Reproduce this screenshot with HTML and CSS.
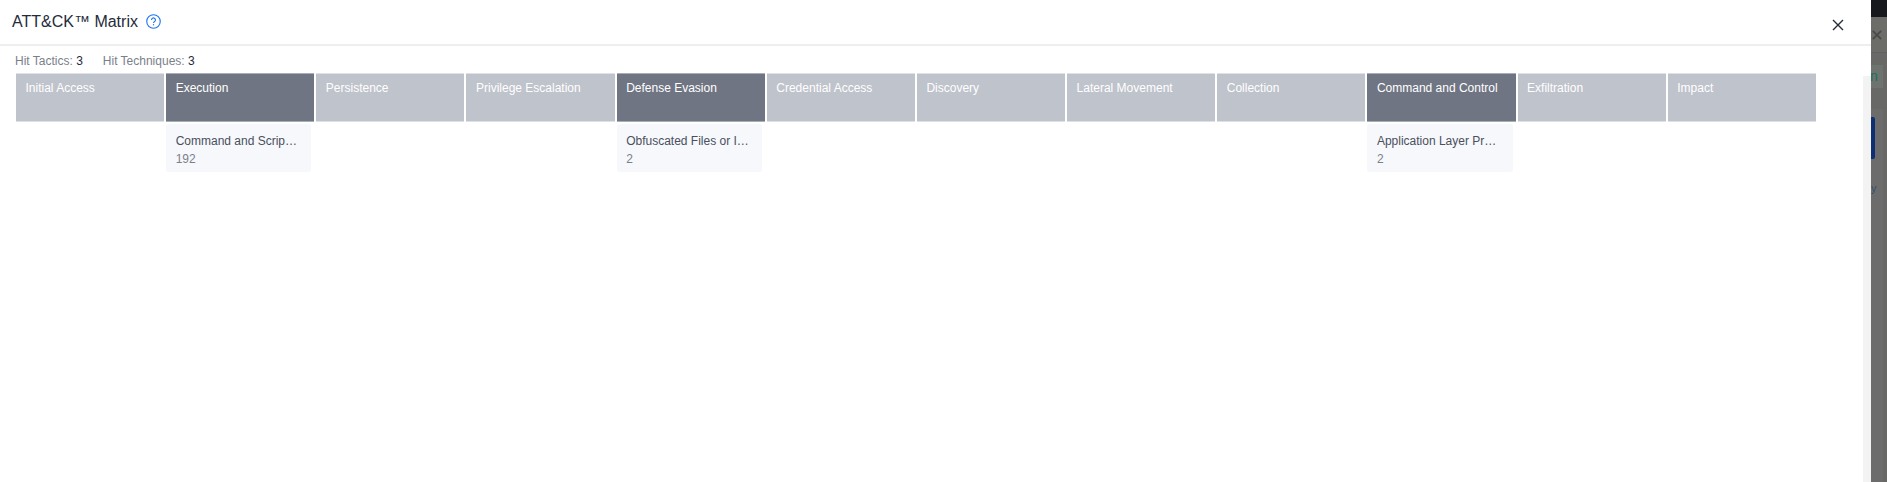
FILE: index.html
```html
<!DOCTYPE html>
<html lang="en">
<head>
<meta charset="utf-8">
<title>ATT&amp;CK Matrix</title>
<link rel="stylesheet" href="styles.css">
</head>
<body>
<div class="screen">
  <main class="modal">
    <header class="modal-head">
      <h1 class="modal-title">ATT&amp;CK™ Matrix</h1>
      <svg class="help-icon" viewBox="0 0 16 16" width="15" height="15" aria-hidden="true">
        <circle cx="8" cy="8" r="7.2" fill="none" stroke="#1f74f0" stroke-width="1.2"/>
        <path d="M5.9 6.3a2.1 2.1 0 1 1 3.3 1.7c-.8.5-1.2.9-1.2 1.7" fill="none" stroke="#1f74f0" stroke-width="1.2"/>
        <rect x="7.4" y="10.8" width="1.2" height="1.3" fill="#1f74f0"/>
      </svg>
      <svg class="close-icon" viewBox="0 0 12 12" width="12" height="12" aria-hidden="true">
        <path d="M1 1l10 10M11 1L1 11" fill="none" stroke="#252b3a" stroke-width="1.4"/>
      </svg>
    </header>
    <div class="modal-body">
      <div class="stats">
        <span class="stat">Hit Tactics: <b>3</b></span>
        <span class="stat">Hit Techniques: <b>3</b></span>
      </div>
      <div class="matrix">
        <section class="col"><div class="tactic">Initial Access</div></section>
        <section class="col">
          <div class="tactic hit">Execution</div>
          <div class="tech"><div class="tech-name">Command and Scripting Interpreter</div><div class="tech-count">192</div></div>
        </section>
        <section class="col"><div class="tactic">Persistence</div></section>
        <section class="col"><div class="tactic">Privilege Escalation</div></section>
        <section class="col">
          <div class="tactic hit">Defense Evasion</div>
          <div class="tech"><div class="tech-name">Obfuscated Files or Information</div><div class="tech-count">2</div></div>
        </section>
        <section class="col"><div class="tactic">Credential Access</div></section>
        <section class="col"><div class="tactic">Discovery</div></section>
        <section class="col"><div class="tactic">Lateral Movement</div></section>
        <section class="col"><div class="tactic">Collection</div></section>
        <section class="col">
          <div class="tactic hit">Command and Control</div>
          <div class="tech"><div class="tech-name">Application Layer Protocol</div><div class="tech-count">2</div></div>
        </section>
        <section class="col"><div class="tactic">Exfiltration</div></section>
        <section class="col"><div class="tactic">Impact</div></section>
      </div>
    </div>
    <div class="scroll-track"></div>
  </main>
  <aside class="backdrop" aria-hidden="true">
    <div class="bd-top"></div>
    <div class="bd-head">
      <svg class="bd-x" viewBox="0 0 12 12" width="10" height="10"><path d="M1 1l10 10M11 1L1 11" fill="none" stroke="#4a4a4a" stroke-width="2.2"/></svg>
    </div>
    <div class="bd-tag">n</div>
    <div class="bd-card">
      <div class="bd-blue"></div>
      <div class="bd-letter">y</div>
    </div>
  </aside>
</div>
</body>
</html>
```
FILE: styles.css
```css
* { box-sizing: border-box; }
html, body { margin: 0; height: 100%; overflow: hidden; background: #fff; }
body { font-family: "Liberation Sans", Arial, sans-serif; font-size: 12px; color: #252b3a; }

.screen { display: flex; width: 1887px; height: 482px; }

.modal { position: relative; flex: 0 0 1871px; background: #fff; }

.modal-head {
  display: flex;
  align-items: center;
  height: 46px;
  padding: 0 12px;
  border-bottom: 2px solid #eeeeef;
}
.modal-title { margin: 0; font-size: 16px; font-weight: 400; line-height: 44px; color: #252b3a; }
.help-icon { margin: -2px 0 0 8px; }
.close-icon { margin: 5px 15px 0 auto; }

.modal-body { padding: 8px 0 0 16px; }

.stats { display: flex; gap: 20px; height: 19px; margin-left: -1px; line-height: 15px; color: #7b7f8a; }
.stat b { font-weight: 400; color: #252b3a; }

.matrix { display: grid; grid-template-columns: repeat(12, 150.16px); width: 1801.92px; }
.col { min-width: 0; }

.tactic {
  width: calc(100% - 2px);
  height: 49px;
  padding: 6px 9.5px;
  line-height: 16px;
  color: #fff;
  background: #bfc3cc;
  border-top: 1px solid #dfe1e6;
  border-bottom: 1px solid #dfe1e6;
}
.tactic.hit { background: #6f7583; border-top-color: #a9adb6; border-bottom-color: #a9adb6; }

.tech {
  width: 145.3px;
  height: 48px;
  margin-top: 2px;
  padding: 8px 12px 0 9.5px;
  background: #f6f8fc;
  border-radius: 2px;
  line-height: 18px;
}
.tech-name { overflow: hidden; white-space: nowrap; text-overflow: ellipsis; color: #4a4f5c; }
.tech-count { color: #7b7f8a; }

.scroll-track {
  position: absolute;
  top: 76px;
  right: 0;
  bottom: 0;
  width: 8px;
  background: #f3f3f3;
}

.backdrop { flex: 0 0 16px; display: flex; flex-direction: column; overflow: hidden; background: #686866; }
.bd-top { height: 17px; background: #16181d; }
.bd-head { height: 36px; padding: 13px 0 0 1px; background: #6c6c69; border-bottom: 1px solid #5f6368; }
.bd-x { display: block; }
.bd-tag {
  width: 12px;
  height: 23px;
  margin-top: 12px;
  font-size: 14px;
  line-height: 23px;
  color: #1f6f5c;
  background: #6d736f;
  text-indent: -1px;
}
.bd-card {
  flex: 1;
  width: 12px;
  margin-top: 21px;
  padding-top: 8px;
  background: #6c6c6c;
}
.bd-blue { width: 4px; height: 42px; background: #0f2f73; border-radius: 0 2px 2px 0; }
.bd-letter { height: 14px; margin-top: 22px; font-size: 11px; line-height: 14px; color: #35506a; }
```
